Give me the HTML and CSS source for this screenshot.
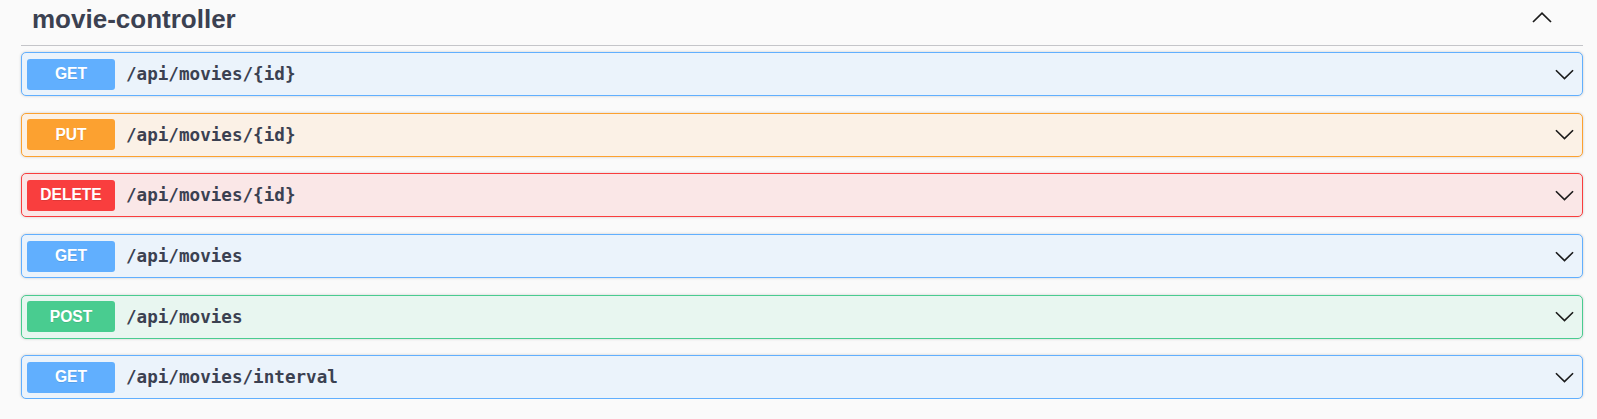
FILE: index.html
```html
<!DOCTYPE html>
<html lang="en">
<head>
<meta charset="utf-8">
<title>movie-controller</title>
<link rel="stylesheet" href="styles.css">
</head>
<body>
<div class="wrapper">
  <section class="tag-section">
    <h3 class="tag-header">
      <span class="tag-title">movie-controller</span>
      <svg class="tag-arrow" viewBox="0 0 20 11" width="20" height="11"><polyline points="1,10 10,1.2 19,10" fill="none" stroke="#1b1b1b" stroke-width="1.7"/></svg>
    </h3>
    <div class="ops">
      <div class="op op-get">
        <span class="method">GET</span>
        <span class="path">/api/movies/{id}</span>
        <svg class="chev" viewBox="0 0 20 11" width="19" height="11"><polyline points="1,1 10,9.8 19,1" fill="none" stroke="#1b1b1b" stroke-width="1.7"/></svg>
      </div>
      <div class="op op-put">
        <span class="method">PUT</span>
        <span class="path">/api/movies/{id}</span>
        <svg class="chev" viewBox="0 0 20 11" width="19" height="11"><polyline points="1,1 10,9.8 19,1" fill="none" stroke="#1b1b1b" stroke-width="1.7"/></svg>
      </div>
      <div class="op op-delete">
        <span class="method">DELETE</span>
        <span class="path">/api/movies/{id}</span>
        <svg class="chev" viewBox="0 0 20 11" width="19" height="11"><polyline points="1,1 10,9.8 19,1" fill="none" stroke="#1b1b1b" stroke-width="1.7"/></svg>
      </div>
      <div class="op op-get">
        <span class="method">GET</span>
        <span class="path">/api/movies</span>
        <svg class="chev" viewBox="0 0 20 11" width="19" height="11"><polyline points="1,1 10,9.8 19,1" fill="none" stroke="#1b1b1b" stroke-width="1.7"/></svg>
      </div>
      <div class="op op-post">
        <span class="method">POST</span>
        <span class="path">/api/movies</span>
        <svg class="chev" viewBox="0 0 20 11" width="19" height="11"><polyline points="1,1 10,9.8 19,1" fill="none" stroke="#1b1b1b" stroke-width="1.7"/></svg>
      </div>
      <div class="op op-get">
        <span class="method">GET</span>
        <span class="path">/api/movies/interval</span>
        <svg class="chev" viewBox="0 0 20 11" width="19" height="11"><polyline points="1,1 10,9.8 19,1" fill="none" stroke="#1b1b1b" stroke-width="1.7"/></svg>
      </div>
    </div>
  </section>
</div>
</body>
</html>
```
FILE: styles.css
```css
html, body {
  margin: 0;
  padding: 0;
  background: #fafafa;
}
.wrapper {
  padding: 0 14px 0 21px;
}
.tag-header {
  margin: 0;
  display: flex;
  align-items: center;
  justify-content: space-between;
  padding: 0 31px 1px 11px;
  border-bottom: 1px solid #c4c5c9;
  box-sizing: content-box;
  height: 44px;
  font-family: "Liberation Sans", Arial, sans-serif;
  font-size: 26px;
  font-weight: 700;
  color: #3b4151;
}
.tag-title {
  line-height: 30px;
  margin-bottom: 6px;
}
.tag-arrow {
  display: block;
  margin-top: -9px;
}
.ops {
  margin-top: 6px;
  display: flex;
  flex-direction: column;
  gap: 16.7px;
}
.op {
  display: flex;
  align-items: center;
  height: 44px;
  box-sizing: border-box;
  padding: 0 8px 0 5px;
  border: 1px solid #61affe;
  border-radius: 5px;
  background: #ebf3fb;
  box-shadow: 0 0 3px rgba(0, 0, 0, 0.19);
}
.method {
  flex: none;
  width: 88px;
  height: 31px;
  display: flex;
  align-items: center;
  justify-content: center;
  border-radius: 3px;
  background: #61affe;
  color: #fff;
  font-family: "Liberation Sans", Arial, sans-serif;
  font-size: 15.6px;
  font-weight: 700;
  text-shadow: 0 1px 0 rgba(0, 0, 0, 0.1);
}
.path {
  flex: 1;
  padding: 0 11px;
  font-family: "DejaVu Sans Mono", "Liberation Mono", monospace;
  font-size: 17.6px;
  font-weight: 700;
  color: #3b4151;
}
.chev {
  flex: none;
  display: block;
}
.op-put {
  border-color: #fca130;
  background: #fbf1e6;
}
.op-put .method {
  background: #fca130;
}
.op-delete {
  border-color: #f93e3e;
  background: #fae7e7;
}
.op-delete .method {
  background: #f93e3e;
}
.op-post {
  border-color: #49cc90;
  background: #e8f6f0;
}
.op-post .method {
  background: #49cc90;
}
```
